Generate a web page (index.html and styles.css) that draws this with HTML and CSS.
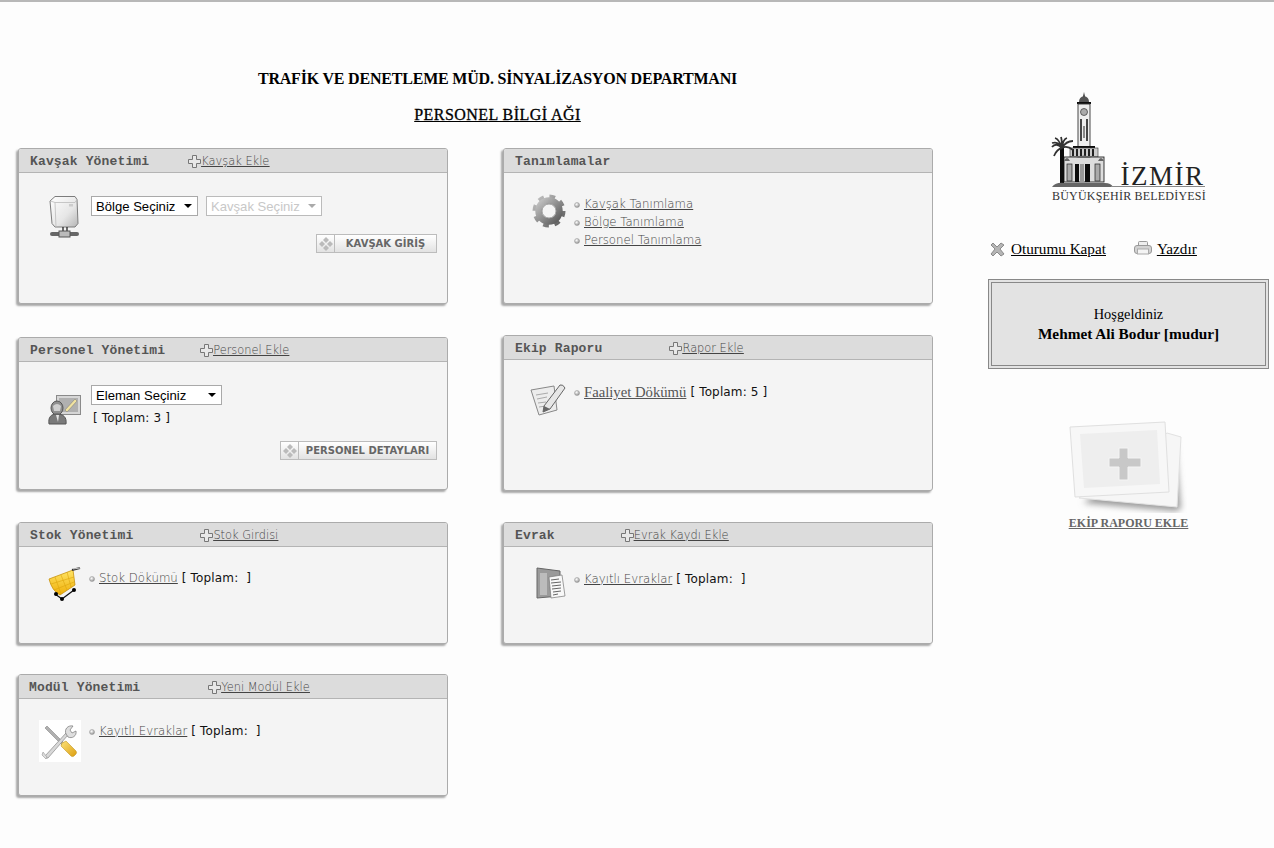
FILE: index.html
```html
<!DOCTYPE html>
<html lang="tr">
<head>
<meta charset="utf-8">
<title>Personel Bilgi Ağı</title>
<link rel="stylesheet" href="styles.css">
</head>
<body>
<svg class="defs" width="0" height="0" aria-hidden="true">
  <defs>
    <radialGradient id="gBullet" cx=".4" cy=".35" r=".7"><stop offset="0" stop-color="#fff"/><stop offset="1" stop-color="#8a8a8a"/></radialGradient>
    <linearGradient id="gServer" x1="0" y1="0" x2="1" y2="1"><stop offset="0" stop-color="#fff"/><stop offset=".6" stop-color="#e6e6e6"/><stop offset="1" stop-color="#b5b5b5"/></linearGradient>
    <linearGradient id="gCart" x1="0" y1="0" x2="0" y2="1"><stop offset="0" stop-color="#ffe566"/><stop offset="1" stop-color="#efae08"/></linearGradient>
    <linearGradient id="gGear" x1="0" y1="0" x2="1" y2="1" gradientUnits="objectBoundingBox"><stop offset="0" stop-color="#c4c4c4"/><stop offset="1" stop-color="#5a5a5a"/></linearGradient>
    <linearGradient id="gHandle" x1="0" y1="0" x2="1" y2="1"><stop offset="0" stop-color="#fbe27a"/><stop offset="1" stop-color="#dd9f10"/></linearGradient>
    <filter id="fBlur" x="-20%" y="-20%" width="140%" height="140%"><feGaussianBlur stdDeviation="3"/></filter>
    <filter id="fSoft"><feGaussianBlur stdDeviation=".35"/></filter>
    <symbol id="plus" viewBox="0 0 13 13"><path d="M4.5.5h4v4h4v4h-4v4h-4v-4h-4v-4h4z" fill="#e8e8e8" stroke="#777"/></symbol>
    <symbol id="bullet" viewBox="0 0 6 6"><circle cx="3" cy="3" r="2.5" fill="url(#gBullet)" stroke="#999" stroke-width=".5"/></symbol>
    <symbol id="diamonds" viewBox="0 0 16 16"><g fill="#bbb"><path d="M8 1l3 3-3 3-3-3z"/><path d="M8 9l3 3-3 3-3-3z"/><path d="M4 5l3 3-3 3-3-3z"/><path d="M12 5l3 3-3 3-3-3z"/></g></symbol>
  </defs>
</svg>

<div class="page">
  <main class="main">
    <header class="titles">
      <h1 class="title">TRAFİK VE DENETLEME MÜD. SİNYALİZASYON DEPARTMANI</h1>
      <h2 class="subtitle">PERSONEL BİLGİ AĞI</h2>
    </header>

    <div class="columns">
      <div class="column">
        <section class="panel panel-kavsak">
          <div class="panel-head">
            <span class="panel-title">Kavşak Yönetimi</span>
            <a class="add-link gap-39" href="#"><svg class="plus"><use href="#plus"/></svg><span>Kavşak Ekle</span></a>
          </div>
          <div class="panel-body body-kavsak">
            <div class="row">
              <div class="icon-cell">
                <svg class="icon" width="32" height="43" viewBox="0 0 32 43">
                  <path d="M1 6 6 1.500h20l2 3 1 24-3 3.500H6l-3-3.500z" fill="url(#gServer)" stroke="#7c7c7c"/>
                  <path d="M1.500 6 6 7.500h20l2-3M6 7.500 7 32" fill="none" stroke="#bbb" stroke-width=".8"/>
                  <rect x="20" y="9" width="4" height="2.500" fill="#ccc"/>
                  <path d="M14 32v6M18 32v6" stroke="#222" stroke-width="1.300"/>
                  <rect x="1" y="37" width="29" height="4" rx="2" fill="#666"/><rect x="10" y="36" width="11" height="6" fill="#bbb" stroke="#555"/>
                </svg>
              </div>
              <div class="selects">
                <label class="select-wrap w-107"><select class="select"><option>Bölge Seçiniz</option></select></label>
                <label class="select-wrap w-116 is-disabled"><select class="select" disabled><option>Kavşak Seçiniz</option></select></label>
              </div>
            </div>
            <div class="actions actions-kavsak">
              <a class="btn" href="#"><span class="btn-icon"><svg width="16" height="16"><use href="#diamonds"/></svg></span><span class="btn-text w-kavsak">KAVŞAK GİRİŞ</span></a>
            </div>
          </div>
        </section>

        <section class="panel panel-personel">
          <div class="panel-head">
            <span class="panel-title">Personel Yönetimi</span>
            <a class="add-link gap-35" href="#"><svg class="plus"><use href="#plus"/></svg><span>Personel Ekle</span></a>
          </div>
          <div class="panel-body body-personel">
            <div class="row">
              <div class="icon-cell">
                <svg class="icon icon-personel" width="33" height="30" viewBox="0 0 33 30">
                  <rect x="8.500" y=".5" width="24" height="19" fill="#d6d6d6" stroke="#8a8a8a"/><rect x="11" y="3" width="19" height="14" fill="#b0b0b0"/>
                  <path d="M17 15 27 4l2 2-10 11z" fill="#f0e2a0" stroke="#777" stroke-width=".5"/>
                  <ellipse cx="9" cy="13" rx="6" ry="7" fill="#8f8f8f" stroke="#555"/><path d="M5 11q4-4 8 0l-1 5H6z" fill="#cfcfcf"/>
                  <path d="M1 29c-1-7 2-10 8-10s10 3 9 10z" fill="#7a7a7a" stroke="#555"/><path d="M8 20h3l-1 7z" fill="#e4e4e4"/>
                </svg>
              </div>
              <div class="stack">
                <label class="select-wrap w-131"><select class="select"><option>Eleman Seçiniz</option></select></label>
                <p class="total total-sel">[ Toplam: 3 ]</p>
              </div>
            </div>
            <div class="actions actions-personel">
              <a class="btn" href="#"><span class="btn-icon"><svg width="16" height="16"><use href="#diamonds"/></svg></span><span class="btn-text w-personel">PERSONEL DETAYLARI</span></a>
            </div>
          </div>
        </section>

        <section class="panel panel-stok">
          <div class="panel-head">
            <span class="panel-title">Stok Yönetimi</span>
            <a class="add-link gap-67" href="#"><svg class="plus"><use href="#plus"/></svg><span>Stok Girdisi</span></a>
          </div>
          <div class="panel-body body-list">
            <div class="row">
              <div class="icon-cell">
                <svg class="icon" width="33" height="34" viewBox="0 0 33 34">
                  <path d="M1 12 25 3l2 15-15 10Q4 24 1 12z" fill="url(#gCart)" stroke="#c8920c" stroke-width=".8"/>
                  <path d="M7 10l6 17M13 8l6 15M19 5l4 15M3 17l23-7M6 23l20-8" stroke="#dba40c" fill="none" stroke-width=".6"/>
                  <path d="M24 3l8-2" stroke="#333" stroke-width="2"/><path d="M25 2l7-1" stroke="#fff" stroke-width=".7"/>
                  <path d="M7 27l7 5 12-9" stroke="#111" stroke-width="1.300" fill="none"/>
                  <circle cx="8" cy="27" r="2" fill="#000"/><circle cx="14" cy="32" r="2" fill="#000"/><circle cx="26" cy="23" r="2" fill="#000"/>
                </svg>
              </div>
              <p class="list-item"><svg class="bullet"><use href="#bullet"/></svg><a class="link" href="#">Stok Dökümü</a> <span class="total">[ Toplam: &nbsp;]</span></p>
            </div>
          </div>
        </section>

        <section class="panel panel-modul">
          <div class="panel-head head-modul">
            <span class="panel-title">Modül Yönetimi</span>
            <a class="add-link gap-68" href="#"><svg class="plus"><use href="#plus"/></svg><span>Yeni Modül Ekle</span></a>
          </div>
          <div class="panel-body body-modul">
            <div class="row">
              <div class="icon-cell">
                <svg class="icon" width="42" height="42" viewBox="0 0 42 42">
                  <rect width="42" height="42" fill="#fff"/>
                  <path d="M6 8 8 6 29 27l-2 2z" fill="#b0b0b0" stroke="#777" stroke-width=".5"/>
                  <path d="M23 23 27 21 37 31a2.500 2.500 0 0 1 0 3l-2 2a2.500 2.500 0 0 1-3 0L22 26z" fill="url(#gHandle)" stroke="#b98a12" stroke-width=".5"/>
                  <path d="M6 36 27 13l2 2L9 38q-3 1-3-2z" fill="#d8d8d8" stroke="#777" stroke-width=".6"/>
                  <path d="M27 14c-2-5 2-9 7-8l-3 4 2 3 4-2c1 5-4 8-8 6z" fill="#dedede" stroke="#777" stroke-width=".7"/>
                  <path d="M4 32l4 5-1 2-4-4z" fill="#ddd" stroke="#888" stroke-width=".5"/>
                </svg>
              </div>
              <p class="list-item"><svg class="bullet"><use href="#bullet"/></svg><a class="link" href="#">Kayıtlı Evraklar</a> <span class="total">[ Toplam: &nbsp;]</span></p>
            </div>
          </div>
        </section>
      </div>

      <div class="column column-mid">
        <section class="panel panel-kavsak">
          <div class="panel-head">
            <span class="panel-title">Tanımlamalar</span>
          </div>
          <div class="panel-body body-tanim">
            <div class="row">
              <div class="icon-cell">
                <svg class="icon" width="34" height="34" viewBox="0 0 34 34">
                  <circle cx="17" cy="17" r="14.500" fill="none" stroke="url(#gGear)" stroke-width="4" stroke-dasharray="5.700 5.690"/>
                  <circle cx="17" cy="17" r="10.500" fill="none" stroke="url(#gGear)" stroke-width="6.500"/>
                  <circle cx="17" cy="17" r="7" fill="#f4f4f4" stroke="#777" stroke-width=".7"/>
                </svg>
              </div>
              <ul class="link-list">
                <li class="list-item"><svg class="bullet"><use href="#bullet"/></svg><a class="link" href="#">Kavşak Tanımlama</a></li>
                <li class="list-item"><svg class="bullet"><use href="#bullet"/></svg><a class="link" href="#">Bölge Tanımlama</a></li>
                <li class="list-item"><svg class="bullet"><use href="#bullet"/></svg><a class="link" href="#">Personel Tanımlama</a></li>
              </ul>
            </div>
          </div>
        </section>

        <section class="panel panel-ekip">
          <div class="panel-head">
            <span class="panel-title">Ekip Raporu</span>
            <a class="add-link gap-67" href="#"><svg class="plus"><use href="#plus"/></svg><span>Rapor Ekle</span></a>
          </div>
          <div class="panel-body body-ekip">
            <div class="row">
              <div class="icon-cell">
                <svg class="icon" width="36" height="35" viewBox="0 0 36 35">
                  <path d="M1 8 24 4l3 24-18 5z" fill="#ececec" stroke="#888"/>
                  <path d="M6 13l12-2M7 17l10-2M8 21l8-1M9 25l7-1" stroke="#aaa"/>
                  <path d="M14 24 30 3q3-1 5 3L20 27l-7 3z" fill="#e6e6e6" stroke="#666"/>
                  <path d="M13 30l1-6 6 3z" fill="#666"/>
                </svg>
              </div>
              <p class="list-item"><svg class="bullet"><use href="#bullet"/></svg><a class="link link-serif" href="#">Faaliyet Dökümü</a> <span class="total">[ Toplam: 5 ]</span></p>
            </div>
          </div>
        </section>

        <section class="panel panel-stok">
          <div class="panel-head">
            <span class="panel-title">Evrak</span>
            <a class="add-link gap-66" href="#"><svg class="plus"><use href="#plus"/></svg><span>Evrak Kaydı Ekle</span></a>
          </div>
          <div class="panel-body body-list">
            <div class="row">
              <div class="icon-cell">
                <svg class="icon" width="30" height="32" viewBox="0 0 30 32">
                  <path d="M1 1 24 4v25L1 31z" fill="#9a9a9a" stroke="#666"/><rect x="4" y="6" width="7" height="22" fill="#bcbcbc"/>
                  <path d="M13 10l13-2 3 21-14 2z" fill="#f8f8f8" stroke="#777" stroke-width=".7"/>
                  <path d="M15 13l8-1M15 16l10-1M16 19l9-1M16 22l9-1M17 25l8-1M17 28l5-1" stroke="#666"/>
                </svg>
              </div>
              <p class="list-item"><svg class="bullet"><use href="#bullet"/></svg><a class="link" href="#">Kayıtlı Evraklar</a> <span class="total">[ Toplam: &nbsp;]</span></p>
            </div>
          </div>
        </section>
      </div>
    </div>
  </main>

  <aside class="side">
    <svg class="logo" width="156" height="112" viewBox="0 0 156 112" role="img" aria-label="İzmir Büyükşehir Belediyesi">
      <g fill="#222" filter="url(#fSoft)">
        <path d="M33 0l1 5h-2z"/>
        <path d="M28 10q0-5 5-6 5 1 5 6z" fill="#555"/>
        <rect x="26" y="10" width="14" height="2" fill="#111"/>
        <rect x="27" y="12" width="12" height="43" fill="#eee" stroke="#333" stroke-width=".9"/>
        <circle cx="33" cy="20" r="3.500" fill="#aaa" stroke="#333" stroke-width=".7"/>
        <rect x="29" y="27" width="2" height="22" fill="#444"/><rect x="35" y="27" width="2" height="22" fill="#444"/>
        <rect x="32" y="34" width="2" height="12" fill="#888"/>
        <rect x="22" y="54" width="22" height="2" fill="#111"/>
        <rect x="19" y="56" width="28" height="9" fill="#ccc" stroke="#333" stroke-width=".6"/>
        <path d="M21 57h2v7h-2zM25 57h2v7h-2zM29 57h2v7h-2zM33 57h2v7h-2zM37 57h2v7h-2zM41 57h2v7h-2z"/>
        <rect x="13" y="65" width="40" height="25" fill="#ddd" stroke="#222" stroke-width=".9"/>
        <path d="M13 69q3-6 6 0zM25 66q8-5 16 0zM47 69q3-6 6 0z" fill="#666"/>
        <rect x="16" y="72" width="5" height="17" fill="#aaa" stroke="#222" stroke-width=".7"/>
        <rect x="24" y="72" width="4" height="18" fill="#111"/>
        <rect x="29" y="72" width="4" height="18" fill="#999"/>
        <rect x="34" y="72" width="5" height="18" fill="#111"/>
        <rect x="44" y="72" width="5" height="17" fill="#aaa" stroke="#222" stroke-width=".7"/>
        <rect x="9" y="56" width="4" height="35" fill="#111"/>
        <g fill="none" stroke="#333" stroke-width="1.800">
          <path d="M11 56q-3-7-10-5M11 56q-6-6-10-1M11 56q-3-9-7-10M11 56q1-9 5-10M11 56q4-7 11-7M11 56q5-3 11 2M11 56q-5 1-8 8M11 56q0-8-1-11"/>
        </g>
        <path d="M1 95q4-5 12-4h41q6 0 8 4z" fill="#666"/>
        <rect x="60" y="94" width="94" height="1" fill="#888"/>
      </g>
      <text class="logo-city" x="69.500" y="93">İZMİR</text>
      <text class="logo-org" x="1" y="108">BÜYÜKŞEHİR BELEDİYESİ</text>
    </svg>

    <nav class="side-links">
      <a class="side-link" href="#">
        <svg class="side-icon icon-close" width="15" height="15" viewBox="0 0 15 15"><path d="M1 3 3 1l4 4 4-4 3 2-4 4 4 5-3 2-4-4-4 4-2-2 4-5z" fill="#b5b5b5" stroke="#777" stroke-width=".8"/></svg>
        <span>Oturumu Kapat</span>
      </a>
      <a class="side-link link-print" href="#">
        <svg class="side-icon icon-print" width="18" height="15" viewBox="0 0 18 15"><rect x="4.500" y=".5" width="9" height="5" rx="1" fill="#eee" stroke="#999"/><rect x=".5" y="4.500" width="17" height="8" rx="2.500" fill="#d2d2d2" stroke="#999"/><rect x="3.500" y="8" width="11" height="5" fill="#f4f4f4" stroke="#aaa"/></svg>
        <span>Yazdır</span>
      </a>
    </nav>

    <div class="welcome">
      <div>Hoşgeldiniz</div>
      <strong class="welcome-name">Mehmet Ali Bodur [mudur]</strong>
    </div>

    <a class="report" href="#">
      <svg class="report-icon" width="118" height="92" viewBox="0 0 118 92">
        <path d="M14 82 106 20l6 68-6 2z" fill="#9a9a9a" filter="url(#fBlur)"/>
        <path d="M98 12l14 4-4 70-98-9z" fill="#f6f6f6" stroke="#e2e2e2"/>
        <path d="M1 6 96 1l4 70-94 5z" fill="#f7f7f7" stroke="#e0e0e0"/>
        <path d="M11 13 88 9l3 54-76 4z" fill="#eeeeee"/>
        <path d="M50 27h9v10h13v9H59v13h-9V46H40v-9h10z" fill="#c8c8c8" stroke="#f4f4f4"/>
      </svg>
      <span class="report-text">EKİP RAPORU EKLE</span>
    </a>
  </aside>
</div>
</body>
</html>
```
FILE: styles.css
```css
* { box-sizing: border-box; }
html, body { margin: 0; padding: 0; }
body {
  background: #fdfdfd;
  border-top: 2px solid #b8b8b8;
  color: #000;
  font-family: "Liberation Serif", serif;
  height: 848px;
  overflow: hidden;
}
.defs { position: absolute; }
.page { display: flex; align-items: flex-start; }
.main { width: 959px; margin-left: 18px; }
.titles { text-align: center; padding-top: 67px; height: 146px; }
.title { margin: 0; font-size: 16px; line-height: 20px; font-weight: bold; letter-spacing: -.2px; }
.subtitle { margin: 16px 0 0; font-size: 16px; line-height: 20px; font-weight: normal; letter-spacing: .45px; text-decoration: underline; -webkit-text-stroke: .3px #000; }
.columns { display: flex; gap: 55px; }
.column { width: 430px; display: flex; flex-direction: column; }
.panel {
  display: flex; flex-direction: column;
  border: 1px solid #ababab; border-radius: 3px;
  background: #f4f4f4;
  box-shadow: -2px 2px 2px #a8a8a8;
}
.panel-kavsak { height: 156px; margin-bottom: 33px; }
.panel-personel { height: 153px; margin-bottom: 32px; }
.panel-stok { height: 122px; margin-bottom: 30px; }
.panel-modul { height: 122px; }
.column-mid .panel-kavsak { margin-bottom: 31px; }
.panel-ekip { height: 156px; margin-bottom: 31px; }
.panel-head {
  display: flex; align-items: center;
  height: 24px; flex: none; padding: 1px 0 0 11px;
  background: #dcdcdc; border-bottom: 1px solid #b4b4b4;
  border-radius: 2px 2px 0 0;
}
.head-modul { padding-left: 10px; }
.panel-title {
  font: bold 13px/1 "Liberation Mono", monospace;
  letter-spacing: .15px; color: #555;
}
.add-link {
  display: flex; align-items: center;
  font: 200 11.4px/14px "DejaVu Sans", sans-serif; color: #444;
}
.add-link span { text-decoration: underline; }
.plus { width: 13px; height: 13px; }
.gap-35 { margin-left: 35px; }
.gap-39 { margin-left: 39px; }
.gap-66 { margin-left: 66px; }
.gap-67 { margin-left: 67px; }
.gap-68 { margin-left: 68px; }
.panel-body { flex: 1; }
.body-kavsak { padding-top: 22px; }
.body-personel { padding-top: 23px; }
.body-list { padding-top: 20px; }
.body-modul { padding-top: 21px; }
.body-tanim { padding-top: 21px; }
.body-ekip { padding-top: 22px; }
.row { display: flex; align-items: flex-start; }
.icon-cell { width: 62px; flex: none; display: flex; justify-content: flex-end; margin-right: 8px; }
.icon { display: block; }
.icon-personel { margin-top: 10px; }
.selects { display: flex; gap: 8px; padding: 1px 0 0 2px; }
.stack { padding-left: 2px; }
.select-wrap { display: block; position: relative; height: 20px; }
.select-wrap::after {
  content: ""; position: absolute; right: 6px; top: 8px;
  border: 4px solid transparent; border-top-color: #000; border-bottom: 0;
  pointer-events: none;
}
.is-disabled::after { border-top-color: #aaa; }
.w-107 { width: 107px; }
.w-116 { width: 116px; }
.w-131 { width: 131px; }
.select {
  appearance: none; width: 100%; height: 20px; margin: 0;
  padding: 1px 0 0 4px; border: 1px solid #a9a9a9; border-radius: 0;
  background: #fff; color: #000; font: 13.1px/18px "Liberation Sans", sans-serif;
}
.select:disabled { color: #c8c8c8; opacity: 1; border-color: #bbb; }
.total { margin: 0; font: 12px/16px "DejaVu Sans", sans-serif; letter-spacing: .15px; color: #111; }
.total-sel { padding: 5px 0 0 2px; }
.actions { display: flex; justify-content: flex-end; padding-right: 10px; }
.actions-kavsak { margin-top: -4px; }
.actions-personel { margin-top: 15px; }
.btn {
  display: flex; height: 19px; border: 1px solid #bcbcbc;
  background: linear-gradient(#fff, #f4f4f4 40%, #e2e2e2);
  text-decoration: none; color: #666;
}
.btn-icon { width: 18px; flex: none; display: flex; align-items: center; justify-content: center; border-right: 1px solid #bcbcbc; }
.btn-text { font: bold 10px/18px "DejaVu Sans", sans-serif; text-align: center; }
.w-kavsak { width: 101px; }
.w-personel { width: 137px; }
.list-item { margin: 0; display: flex; align-items: center; height: 18px; gap: 4px; list-style: none; white-space: pre; }
.body-list .list-item { margin-top: 2px; }
.column-mid .body-list .list-item { margin-top: 3px; }
.body-modul .list-item { margin-top: 2px; }
.body-ekip .list-item { margin-top: 1px; }
.body-tanim .link-list { margin-top: 1px; }
.bullet { width: 6px; height: 6px; flex: none; margin-top: 2px; }
.link { font: 200 11.75px/16px "DejaVu Sans", sans-serif; color: #444; text-decoration: underline; }
.link-serif { font: 14.7px/16px "Liberation Serif", serif; color: #555; }
.link-list { margin: 0; padding: 0; }

.side { width: 281px; margin-left: 11px; text-align: center; padding-top: 90px; }
.logo { display: block; margin-left: 63px; }
.logo-city { font: 27px "Liberation Serif", serif; letter-spacing: 1.5px; fill: #222; }
.logo-org { font: 12px "Liberation Serif", serif; letter-spacing: .2px; fill: #333; }
.side-links { display: flex; align-items: flex-start; margin-top: 36px; padding-left: 2px; height: 39px; }
.side-link { display: flex; gap: 6px; color: #000; font-size: 15.2px; line-height: 18px; }
.side-link span { text-decoration: underline; }
.link-print { margin-left: 28px; gap: 5px; }
.side-icon { flex: none; }
.icon-close { margin-top: 2px; }
.icon-print { margin-top: 1px; }
.welcome {
  height: 90px; border: 4px double #888;
  background: #e3e3e3;
  display: flex; flex-direction: column; justify-content: center; align-items: center;
  font-size: 14.4px; line-height: 20px;
}
.welcome-name { font-size: 15.3px; }
.report { display: inline-flex; flex-direction: column; align-items: center; margin-top: 52px; color: #666; }
.report-icon { display: block; }
.report-text { font-size: 12px; line-height: 14px; font-weight: bold; text-decoration: underline; margin-top: 3px; }
```
